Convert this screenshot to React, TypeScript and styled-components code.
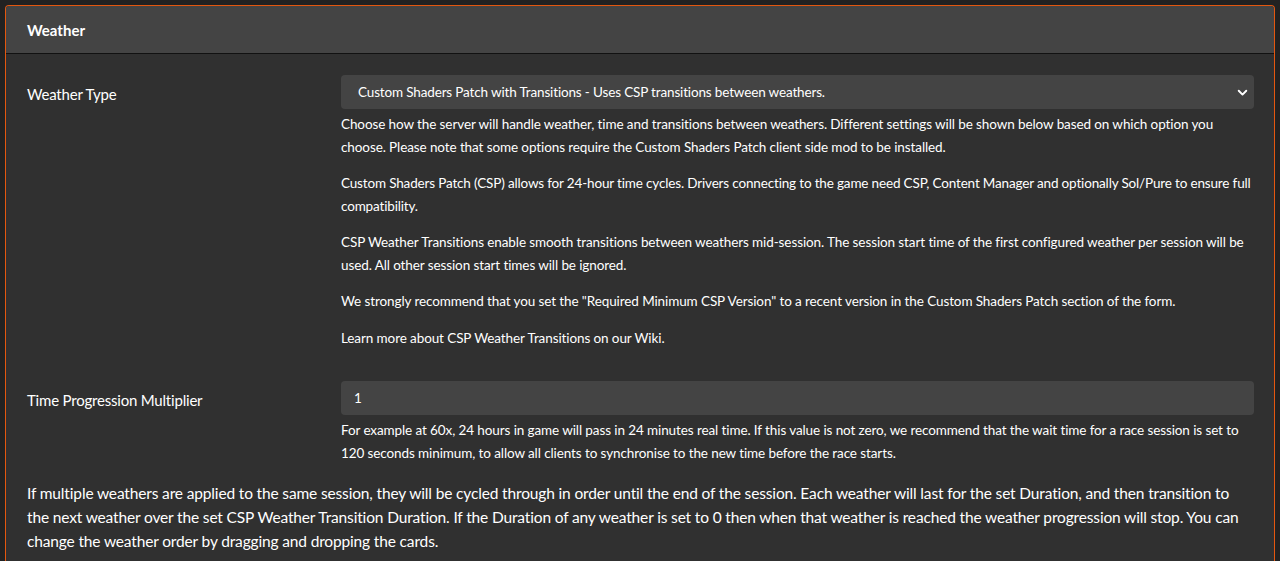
import styled, { createGlobalStyle } from "styled-components";

const GlobalStyle = createGlobalStyle`
  html, body {
    margin: 0;
    padding: 0;
    background: #222222;
    color: #ffffff;
    font-family: Lato, "Noto Sans", sans-serif;
  }
  * {
    box-sizing: border-box;
  }
`;

const Page = styled.div`
  padding: 5px 5px 0 5px;
  height: 561px;
  overflow: hidden;
`;

const Card = styled.section`
  border: 1px solid #e4570f;
  border-bottom: none;
  border-radius: 4px 4px 0 0;
  background: #303030;
  width: 1270px;
`;

const CardHeader = styled.header`
  background: #444444;
  border-bottom: 1px solid #111111;
  border-radius: 3px 3px 0 0;
  padding: 12px 20px 11px 21px;
  font-size: 15px;
  line-height: 24px;
  font-weight: 700;
`;

const CardBody = styled.div`
  padding: 21px 20px 20px 20px;
`;

const FormRow = styled.div<{ $gap?: number }>`
  display: grid;
  grid-template-columns: 315px 1fr;
  margin-bottom: ${(p) => p.$gap ?? 16}px;
`;

const Label = styled.label`
  font-size: 15px;
  line-height: 24px;
  padding: 7px 0 0 1px;
  letter-spacing: -0.2px;
`;

const SelectBox = styled.div`
  display: flex;
  align-items: center;
  justify-content: space-between;
  height: 34px;
  background: #444444;
  border-radius: 4px;
  padding: 0 6px 0 17px;
  font-size: 13.5px;
  letter-spacing: -0.15px;
`;

const InputBox = styled.div`
  display: flex;
  align-items: center;
  height: 34px;
  background: #444444;
  border-radius: 4px;
  padding: 0 13px;
  font-size: 13.5px;
`;

const Help = styled.div`
  margin-top: 4px;
  font-size: 13.5px;
  line-height: 22.5px;
`;

const HelpPara = styled.p<{ $tight?: boolean }>`
  margin: 0 0 14px 0;
  letter-spacing: ${(p) => (p.$tight ? "-0.16px" : "-0.1px")};
  &:last-child {
    margin-bottom: 0;
  }
`;

const Note = styled.p`
  margin: 17px 0 0 1px;
  font-size: 15.5px;
  line-height: 24px;
  letter-spacing: -0.15px;
`;

const Chevron = () => (
  <svg width="11" height="11" viewBox="0 0 16 16" fill="none">
    <path
      d="M2.5 5.5 8 11l5.5-5.5"
      stroke="#ffffff"
      strokeWidth="2.8"
      strokeLinecap="round"
      strokeLinejoin="round"
    />
  </svg>
);

const App = () => {
  return (
    <>
      <GlobalStyle />
      <Page>
        <Card>
          <CardHeader>Weather</CardHeader>
          <CardBody>
            <FormRow $gap={32}>
              <Label>Weather Type</Label>
              <div>
                <SelectBox>
                  <span>
                    Custom Shaders Patch with Transitions - Uses CSP transitions between weathers.
                  </span>
                  <Chevron />
                </SelectBox>
                <Help>
                  <HelpPara>
                    Choose how the server will handle weather, time and transitions between
                    weathers. Different settings will be shown below based on which option you
                    choose. Please note that some options require the Custom Shaders Patch client
                    side mod to be installed.
                  </HelpPara>
                  <HelpPara $tight>
                    Custom Shaders Patch (CSP) allows for 24-hour time cycles. Drivers connecting
                    to the game need CSP, Content Manager and optionally Sol/Pure to ensure full
                    compatibility.
                  </HelpPara>
                  <HelpPara>
                    CSP Weather Transitions enable smooth transitions between weathers mid-session.
                    The session start time of the first configured weather per session will be
                    used. All other session start times will be ignored.
                  </HelpPara>
                  <HelpPara>
                    We strongly recommend that you set the "Required Minimum CSP Version" to a
                    recent version in the Custom Shaders Patch section of the form.
                  </HelpPara>
                  <HelpPara>Learn more about CSP Weather Transitions on our Wiki.</HelpPara>
                </Help>
              </div>
            </FormRow>
            <FormRow $gap={0}>
              <Label>Time Progression Multiplier</Label>
              <div>
                <InputBox>1</InputBox>
                <Help>
                  <HelpPara>
                    For example at 60x, 24 hours in game will pass in 24 minutes real time. If this
                    value is not zero, we recommend that the wait time for a race session is set to
                    120 seconds minimum, to allow all clients to synchronise to the new time before
                    the race starts.
                  </HelpPara>
                </Help>
              </div>
            </FormRow>
            <Note>
              If multiple weathers are applied to the same session, they will be cycled through in
              order until the end of the session. Each weather will last for the set Duration, and
              then transition to the next weather over the set CSP Weather Transition Duration. If
              the Duration of any weather is set to 0 then when that weather is reached the weather
              progression will stop. You can change the weather order by dragging and dropping the
              cards.
            </Note>
          </CardBody>
        </Card>
      </Page>
    </>
  );
};

export default App;
